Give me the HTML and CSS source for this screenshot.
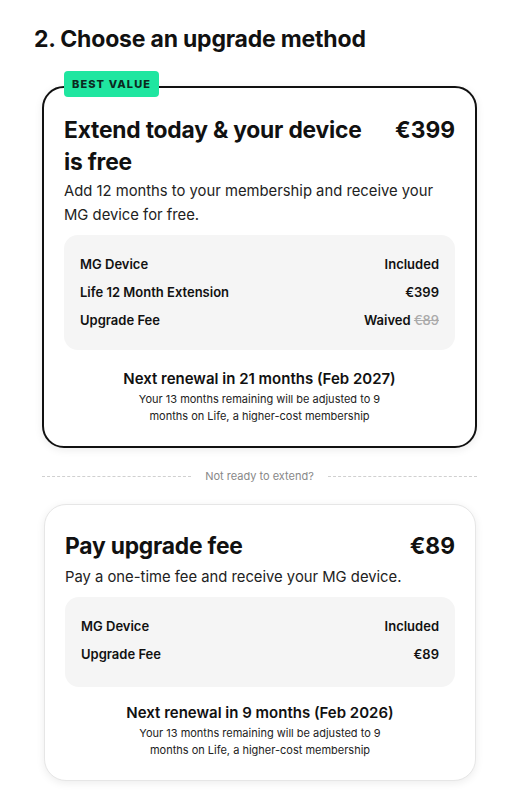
FILE: index.html
```html
<!DOCTYPE html>
<html>
<head>
<meta charset="utf-8">
<link rel="stylesheet" href="styles.css">
</head>
<body>
<main class="page">
  <h2 class="section-title">2. Choose an upgrade method</h2>

  <section class="option option--selected">
    <span class="badge">BEST VALUE</span>
    <div class="option-head">
      <h3 class="option-title">Extend today &amp; your device is free</h3>
      <span class="option-price">€399</span>
    </div>
    <p class="option-desc">Add 12 months to your membership and receive your MG device for free.</p>
    <div class="summary">
      <div class="summary-row"><span>MG Device</span><span>Included</span></div>
      <div class="summary-row"><span>Life 12 Month Extension</span><span>€399</span></div>
      <div class="summary-row"><span>Upgrade Fee</span><span>Waived <s class="old">€89</s></span></div>
    </div>
    <div class="renewal">
      <div class="renewal-title">Next renewal in 21 months (Feb 2027)</div>
      <p class="renewal-note">Your 13 months remaining will be adjusted to 9<br>months on Life, a higher-cost membership</p>
    </div>
  </section>

  <div class="divider"><span class="divider-line"></span><span class="divider-text">Not ready to extend?</span><span class="divider-line"></span></div>

  <section class="option option--plain">
    <div class="option-head">
      <h3 class="option-title">Pay upgrade fee</h3>
      <span class="option-price">€89</span>
    </div>
    <p class="option-desc">Pay a one-time fee and receive your MG device.</p>
    <div class="summary">
      <div class="summary-row"><span>MG Device</span><span>Included</span></div>
      <div class="summary-row"><span>Upgrade Fee</span><span>€89</span></div>
    </div>
    <div class="renewal">
      <div class="renewal-title">Next renewal in 9 months (Feb 2026)</div>
      <p class="renewal-note">Your 13 months remaining will be adjusted to 9<br>months on Life, a higher-cost membership</p>
    </div>
  </section>
</main>
</body>
</html>
```

FILE: styles.css
```css
* { box-sizing: border-box; }
html, body { margin: 0; background: #fff; }
body {
  font-family: "Inter", "Liberation Sans", sans-serif;
  color: #111;
}
.page {
  padding: 24px 38px 20px 34px;
  width: 515px;
}
.section-title {
  margin: 0 0 32px;
  font-size: 23px;
  font-weight: 700;
  line-height: 30px;
  letter-spacing: -0.2px;
}
.option {
  position: relative;
  margin-left: 8px;
  width: 435px;
  background: #fff;
  border-radius: 22px;
}
.option--selected {
  border: 2px solid #111;
  padding: 26px 20px 21px 20px;
  box-shadow: 0 2px 8px rgba(0,0,0,0.08);
}
.option--plain {
  margin-left: 10px;
  width: 432px;
  border: 1px solid #e6e6e6;
  padding: 25px 20px 21px 20px;
  box-shadow: 0 2px 8px rgba(0,0,0,0.08);
}
.badge {
  position: absolute;
  top: -17px;
  left: 20px;
  background: #1fe6a0;
  color: #0c2a20;
  font-size: 11px;
  font-weight: 800;
  letter-spacing: 1.1px;
  line-height: 26px;
  padding: 0 8px;
  border-radius: 4px;
}
.option-head {
  display: flex;
  justify-content: space-between;
  align-items: flex-start;
  gap: 24px;
}
.option-title {
  margin: 0;
  font-size: 22.8px;
  line-height: 32px;
  font-weight: 700;
  max-width: 305px;
  letter-spacing: -0.2px;
}
.option-price {
  font-size: 22.8px;
  line-height: 32px;
  font-weight: 700;
}
.option-desc {
  margin: 1px 0 8px;
  font-size: 14.8px;
  line-height: 24px;
  color: #222;
}
.option--plain .option-desc {
  margin-top: 3px;
}
.summary {
  background: #f5f5f5;
  border-radius: 14px;
  padding: 15px 16px 16px;
  display: flex;
  flex-direction: column;
}
.option--plain .summary {
  padding-bottom: 19px;
}
.summary-row {
  display: flex;
  justify-content: space-between;
  font-size: 13px;
  font-weight: 600;
  line-height: 28px;
}
.old { color: #aaa; font-weight: 500; }
.renewal {
  text-align: center;
  margin-top: 18px;
}
.option--plain .renewal {
  margin-top: 15px;
}
.renewal-title {
  font-size: 15px;
  font-weight: 600;
  line-height: 22px;
}
.renewal-note {
  margin: 1px 0 0;
  font-size: 11px;
  line-height: 17px;
  color: #222;
}
.divider {
  display: flex;
  align-items: center;
  gap: 14px;
  margin: 20px 0 20px 8px;
  width: 435px;
}
.divider-line {
  flex: 1;
  border-top: 1px dashed #d0d0d0;
}
.divider-text {
  font-size: 11px;
  color: #888;
  line-height: 16px;
}
```
